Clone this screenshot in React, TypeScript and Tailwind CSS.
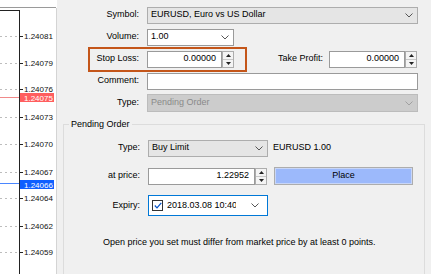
import React from 'react';

const labels = [
  { y: 36, v: '1.24081' },
  { y: 63, v: '1.24079' },
  { y: 89, v: '1.24076' },
  { y: 117, v: '1.24073' },
  { y: 144, v: '1.24070' },
  { y: 172, v: '1.24067' },
  { y: 198, v: '1.24064' },
  { y: 226, v: '1.24062' },
  { y: 252, v: '1.24059' },
];

// price chart strip on the left
const Chart: React.FC = () => (
  <svg width="57" height="274" className="shrink-0 block" style={{ fontFamily: '"Liberation Sans", Arial, sans-serif' }}>
    <rect x="0" y="0" width="57" height="274" fill="#ffffff" />
    <line x1="0" y1="7.5" x2="56" y2="7.5" stroke="#9a9a9a" />
    <line x1="0" y1="10.5" x2="19" y2="10.5" stroke="#222" />
    <line x1="19.5" y1="10" x2="19.5" y2="274" stroke="#222" />
    <line x1="56.5" y1="8" x2="56.5" y2="274" stroke="#d4d4d4" />
    {labels.map((l) => (
      <g key={l.v}>
        <line x1="0" y1={l.y + 0.5} x2="17" y2={l.y + 0.5} stroke="#bdbdbd" strokeDasharray="2 3" />
        <line x1="20" y1={l.y + 0.5} x2="23" y2={l.y + 0.5} stroke="#222" />
        <text x="24" y={l.y + 3} fontSize="8" fill="#111">{l.v}</text>
      </g>
    ))}
    <line x1="0" y1="97.5" x2="19" y2="97.5" stroke="#f08a8a" />
    <rect x="20" y="93" width="34" height="9" fill="#ff5e5e" />
    <text x="24" y="100.5" fontSize="8" fill="#fff">1.24075</text>
    <line x1="0" y1="183.5" x2="19" y2="183.5" stroke="#4a86ff" />
    <rect x="20" y="180" width="34" height="9" fill="#0f5fff" />
    <text x="24" y="187.5" fontSize="8" fill="#fff">1.24066</text>
  </svg>
);

const Chevron: React.FC<{ color?: string }> = ({ color = '#555' }) => (
  <svg width="8" height="5" viewBox="0 0 8 5" className="shrink-0">
    <path d="M0.5 0.5 L4 4 L7.5 0.5" fill="none" stroke={color} strokeWidth="1" />
  </svg>
);

const Spinner: React.FC = () => (
  <div className="flex flex-col w-[12px] h-full border border-[#adadad] bg-[#f4f4f4]">
    <div className="flex-1 flex items-center justify-center border-b border-[#c8c8c8]">
      <svg width="5" height="3" viewBox="0 0 5 3"><path d="M0 3 L2.5 0 L5 3 Z" fill="#222" /></svg>
    </div>
    <div className="flex-1 flex items-center justify-center">
      <svg width="5" height="3" viewBox="0 0 5 3"><path d="M0 0 L2.5 3 L5 0 Z" fill="#222" /></svg>
    </div>
  </div>
);

const NumField: React.FC<{ value: string; w: string }> = ({ value, w }) => (
  <div className={`flex h-[17px] ${w}`}>
    <div className="flex-1 flex items-center justify-end pr-[5px] bg-white border border-[#9a9a9a]">{value}</div>
    <Spinner />
  </div>
);

const Row: React.FC<{ label: string; children: React.ReactNode; lw?: string; h?: string }> = ({ label, children, lw = 'w-[90px]', h = 'h-[22px]' }) => (
  <div className={`flex items-center ${h}`}>
    <div className={`${lw} text-right pr-[8px] shrink-0`}>{label}</div>
    {children}
  </div>
);

export default function App() {
  return (
    <div
      className="flex w-[431px] h-[274px] overflow-hidden bg-[#f0f0f0] text-[9px] text-[#000]"
      style={{ fontFamily: '"Liberation Sans", Arial, sans-serif' }}
    >
      <Chart />
      <div className="flex-1 flex flex-col pt-[4px]">
        <Row label="Symbol:">
          <div className="flex items-center justify-between w-[271px] h-[17px] px-[3px] pr-[4px] bg-[#e5e5e5] border border-[#adadad]">
            <span>EURUSD, Euro vs US Dollar</span>
            <Chevron />
          </div>
        </Row>
        <Row label="Volume:">
          <div className="flex items-center justify-between w-[87px] h-[17px] px-[3px] pr-[4px] bg-white border border-[#9a9a9a]">
            <span>1.00</span>
            <Chevron />
          </div>
        </Row>
        <div className="relative">
          <Row label="Stop Loss:">
            <NumField value="0.00000" w="w-[87px]" />
            <div className="w-[95px] text-right pr-[6px] shrink-0">Take Profit:</div>
            <NumField value="0.00000" w="w-[88px]" />
          </Row>
          <div className="absolute left-[31px] top-[-1px] w-[159px] h-[25px] border-2 border-[#c4561a] pointer-events-none" />
        </div>
        <Row label="Comment:">
          <div className="w-[271px] h-[17px] bg-white border border-[#9a9a9a]" />
        </Row>
        <Row label="Type:">
          <div className="flex items-center justify-between w-[271px] h-[18px] px-[3px] pr-[4px] bg-[#cccccc] border border-[#bcbcbc] text-[#8a8a8a]">
            <span>Pending Order</span>
            <Chevron color="#a0a0a0" />
          </div>
        </Row>

        <div className="relative mt-[10px] ml-[6px] w-[362px] flex-1 border-t border-l border-r border-[#dcdcdc] pt-[12px]">
          <span className="absolute left-[5px] top-[-6px] px-[2px] bg-[#f0f0f0] leading-[11px]">Pending Order</span>
          <Row label="Type:" lw="w-[84px]">
            <div className="flex items-center justify-between w-[120px] h-[17px] px-[3px] pr-[4px] bg-[#e5e5e5] border border-[#adadad]">
              <span>Buy Limit</span>
              <Chevron />
            </div>
            <span className="ml-[5px]">EURUSD 1.00</span>
          </Row>
          <Row label="at price:" lw="w-[84px]" h="h-[18px] mt-[8px]">
            <NumField value="1.22952" w="w-[119px]" />
            <div className="ml-[7px] w-[139px] h-[18px] flex items-center justify-center bg-[#9cb9fb] border border-[#adadad] shadow-[inset_0_0_0_1px_#c8d6f8]">
              Place
            </div>
          </Row>
          <Row label="Expiry:" lw="w-[84px]" h="h-[21px] mt-[10px]">
            <div className="flex items-center w-[120px] h-[21px] pl-[3px] pr-[8px] bg-white border border-[#0078d7]">
              <div className="w-[11px] h-[11px] border border-[#333] flex items-center justify-center shrink-0">
                <svg width="8" height="7" viewBox="0 0 8 7"><path d="M0.8 3.5 L3 5.8 L7.3 0.8" fill="none" stroke="#0050c8" strokeWidth="1.2" /></svg>
              </div>
              <span className="ml-[4px] w-[69px] overflow-hidden whitespace-nowrap">2018.03.08 10:40</span>
              <span className="ml-auto"><Chevron /></span>
            </div>
          </Row>
          <div className="mt-[21px] pl-[39px] leading-[11px]">Open price you set must differ from market price by at least 0 points.</div>
        </div>
      </div>
    </div>
  );
}
